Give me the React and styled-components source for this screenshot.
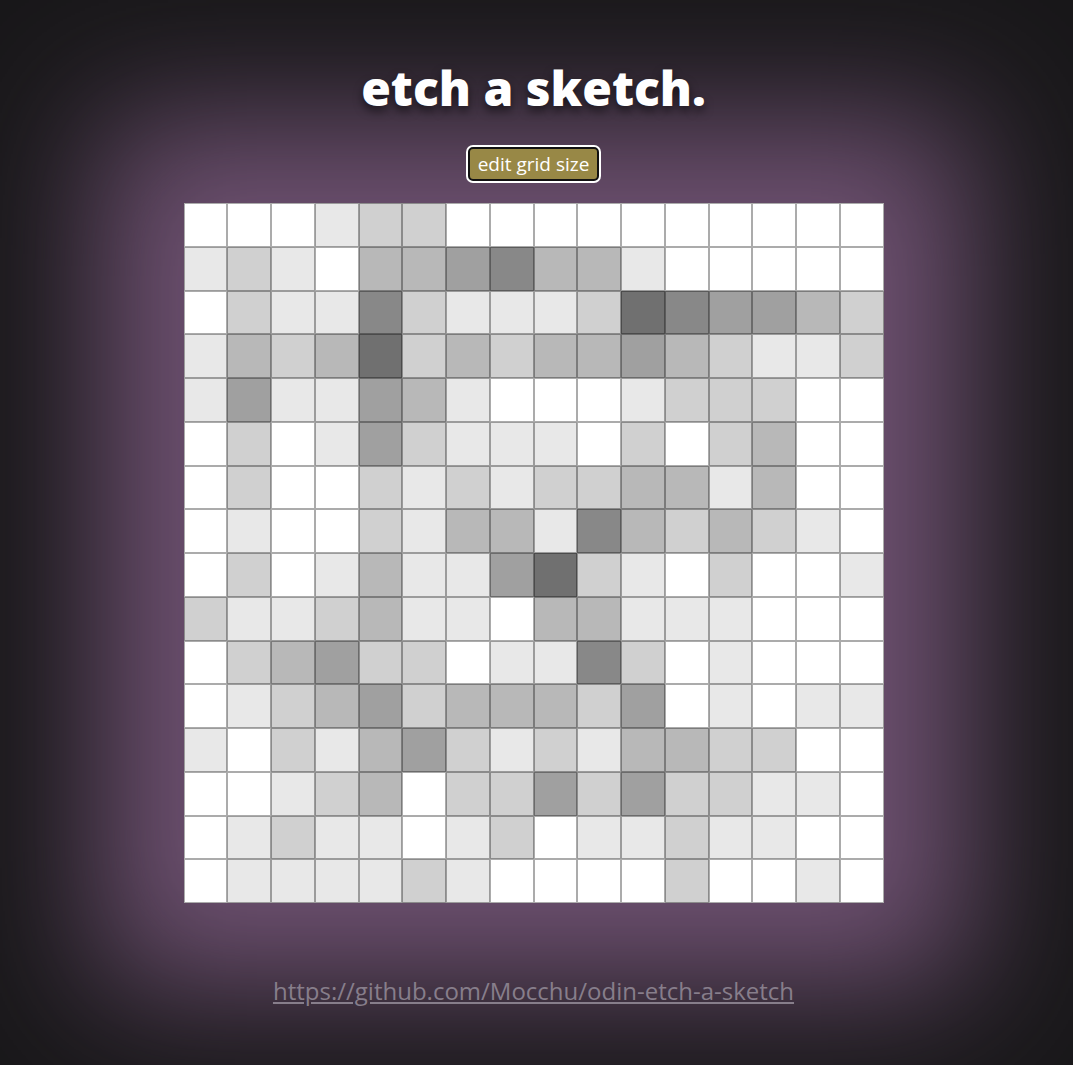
import React from 'react';
import styled, { createGlobalStyle } from 'styled-components';

const GlobalStyle = createGlobalStyle`
  html, body {
    margin: 0;
    padding: 0;
    background: #19181a;
  }
  body {
    font-family: "Open Sans", "Noto Sans", sans-serif;
    min-height: 1065px;
    overflow: hidden;
  }
`;

// how many passes each square got (0 = untouched)
const shades = [
  '0001220000000000',
  '1210334533100000',
  '0211521112654432',
  '1323623233432112',
  '1411431000122200',
  '0201421110202300',
  '0200212122331300',
  '0100213315323210',
  '0201311462102001',
  '2112311033111000',
  '0234220115201000',
  '0123423332401011',
  '1021342121332200',
  '0012302242422110',
  '0121101201121100',
  '0111121000020010',
].map(row => row.split('').map(Number));

const Page = styled.main`
  display: flex;
  flex-direction: column;
  align-items: center;
  padding: 64px 6px 0 0;
`;

const Title = styled.h1`
  position: relative;
  margin: 0;
  font-size: 48px;
  line-height: 48px;
  font-weight: 800;
  color: #fff;
  text-shadow: 0 5px 10px rgba(0, 0, 0, 0.55);
`;

const EditButton = styled.button`
  position: relative;
  margin-top: 35px;
  height: 34px;
  padding: 0 8px;
  border: 2px solid #121212;
  border-radius: 5px;
  box-shadow: 0 0 0 2px #fff;
  background: #988846;
  color: #fff;
  font-family: inherit;
  font-size: 19px;
  line-height: 1;
  cursor: pointer;
`;

const Board = styled.div`
  margin-top: 22px;
  width: 700px;
  height: 700px;
  display: grid;
  grid-template-columns: repeat(16, 1fr);
  grid-template-rows: repeat(16, 1fr);
  background: #fff;
  box-shadow: 0 0 130px 85px #6e5171;
`;

const Cell = styled.div`
  box-sizing: border-box;
  border: 1px solid rgba(0, 0, 0, 0.33);
  background: ${props => {
    const v = 256 - props.level * 24;
    return props.level === 0 ? '#fff' : `rgb(${v}, ${v}, ${v})`;
  }};
`;

const RepoLink = styled.a`
  position: relative;
  margin-top: 71px;
  font-size: 24px;
  color: #877e8b;
  text-decoration: underline;
`;

export default function App() {
  return (
    <>
      <GlobalStyle />
      <Page>
        <Title>etch a sketch.</Title>
        <EditButton>edit grid size</EditButton>
        <Board>
          {shades.map((row, r) =>
            row.map((level, c) => <Cell key={`${r}-${c}`} level={level} />)
          )}
        </Board>
        <RepoLink href="#">https://github.com/Mocchu/odin-etch-a-sketch</RepoLink>
      </Page>
    </>
  );
}
